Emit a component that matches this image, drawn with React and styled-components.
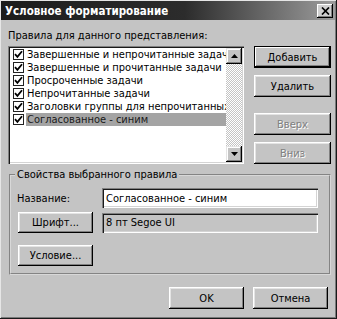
import React from 'react';
import styled, { createGlobalStyle } from 'styled-components';

const FONT = '"DejaVu Sans Condensed", "DejaVu Sans", sans-serif';

const GlobalStyle = createGlobalStyle`
  body {
    margin: 0;
    font-family: ${FONT};
    font-size: 11px;
  }
`;

const Window = styled.div`
  box-sizing: border-box;
  width: 337px;
  height: 319px;
  padding: 1px 2px 2px 1px;
  background: #c4c4c4;
  box-shadow: inset -1px -1px #1a1a1a, inset 1px 1px #e6e6e6, inset -2px -2px #7a7a7a;
  display: flex;
  flex-direction: column;
  font-family: ${FONT};
  font-size: 11px;
  color: #000;
`;

const TitleBar = styled.div`
  height: 19px;
  display: flex;
  align-items: center;
  justify-content: space-between;
  padding: 0 2px 0 4px;
  background: linear-gradient(to right, #1c1c1c, #2c2c2c 55%, #9c9c9c);
`;

const TitleText = styled.span`
  color: #fff;
  font-weight: bold;
  font-size: 11.5px;
`;

const CloseButton = styled.div`
  width: 16px;
  height: 14px;
  background: #d0d0d0;
  box-shadow: inset -1px -1px #000, inset 1px 1px #fff, inset -2px -2px #808080;
  display: flex;
  align-items: center;
  justify-content: center;
`;

const Body = styled.div`
  display: flex;
  flex-direction: column;
  padding: 9px 4px 0 7px;
`;

const Label = styled.div`
  line-height: 14px;
  white-space: nowrap;
`;

const MainRow = styled.div`
  display: flex;
  gap: 10px;
  margin-top: 3px;
  height: 118px;
`;

const ListBox = styled.div`
  box-sizing: border-box;
  width: 236px;
  height: 100%;
  background: #fff;
  padding: 2px;
  box-shadow: inset 1px 1px #808080, inset 2px 2px #1a1a1a, inset -1px -1px #fff, inset -2px -2px #d4d4d4;
  display: flex;
`;

const Items = styled.div`
  flex: 1;
  min-width: 0;
  overflow: hidden;
`;

const Item = styled.div`
  display: flex;
  align-items: center;
  height: 13px;
  padding-left: 3px;
`;

const CheckBox = styled.span`
  box-sizing: border-box;
  width: 11px;
  height: 11px;
  flex: none;
  margin-right: 2px;
  background: #fff;
  border: 1px solid #222;
  display: flex;
  align-items: center;
  justify-content: center;
`;

const ItemText = styled.span`
  flex: 1;
  line-height: 13px;
  padding-left: 1px;
  white-space: nowrap;
  overflow: hidden;
  background: ${p => (p.$selected ? '#a4a4a4' : 'transparent')};
  color: ${p => (p.$selected ? '#1a1a1a' : '#000')};
`;

const ScrollBar = styled.div`
  width: 16px;
  display: flex;
  flex-direction: column;
`;

const ArrowButton = styled.div`
  width: 16px;
  height: 16px;
  background: #c4c4c4;
  box-shadow: inset -1px -1px #000, inset 1px 1px #e4e4e4, inset -2px -2px #808080, inset 2px 2px #fff;
  display: flex;
  align-items: center;
  justify-content: center;
`;

const Track = styled.div`
  flex: 1;
  background: repeating-conic-gradient(#c4c4c4 0 25%, #fff 0 50%) 0 0 / 2px 2px;
`;

const ButtonColumn = styled.div`
  display: flex;
  flex-direction: column;
  gap: 7px;
`;

const Button = styled.button`
  box-sizing: border-box;
  width: ${p => p.$w || 75}px;
  height: ${p => p.$h || 22}px;
  margin-top: ${p => p.$push || 0}px;
  padding: 0;
  border: none;
  background: #c4c4c4;
  font-family: ${FONT};
  font-size: 11px;
  color: ${p => (p.disabled ? '#808080' : '#000')};
  text-shadow: ${p => (p.disabled ? '1px 1px #fff' : 'none')};
  box-shadow: ${p =>
    p.$default
      ? 'inset 0 0 0 1px #000, inset -2px -2px #000, inset 2px 2px #fff, inset -3px -3px #808080'
      : 'inset -1px -1px #000, inset 1px 1px #fff, inset -2px -2px #808080, inset 2px 2px #e4e4e4'};
`;

const Group = styled.fieldset`
  box-sizing: border-box;
  width: 322px;
  margin: 4px 0 0 1px;
  padding: 6px 10px 7px 7px;
  border: 2px groove #d8d8d8;
  min-width: 0;
`;

const Legend = styled.legend`
  padding: 0 2px;
  margin-left: -3px;
  line-height: 14px;
`;

const FormGrid = styled.div`
  display: grid;
  grid-template-columns: 75px 216px;
  column-gap: 9px;
  row-gap: 4px;
  align-items: center;
`;

const FieldLabel = styled.span`
  margin-left: -1px;
`;

const Field = styled.div`
  box-sizing: border-box;
  height: 20px;
  padding: 0 4px;
  display: flex;
  align-items: center;
  background: ${p => (p.$readOnly ? '#c4c4c4' : '#fff')};
  box-shadow: inset 1px 1px #808080, inset 2px 2px #1a1a1a, inset -1px -1px #fff, inset -2px -2px #d4d4d4;
  white-space: nowrap;
`;

const ConditionRow = styled.div`
  margin-top: 12px;
`;

const Footer = styled.div`
  display: flex;
  justify-content: flex-end;
  gap: 9px;
  margin-top: 12px;
  padding-right: 3px;
`;

const Check = () => (
  <svg width="9" height="9" viewBox="0 0 9 9">
    <path d="M1 4.2 L3.4 6.8 L8 1.2" fill="none" stroke="#000" strokeWidth="1.8" />
  </svg>
);

const Arrow = ({ down }) => (
  <svg width="7" height="4" viewBox="0 0 7 4">
    <path d={down ? 'M0 0 H7 L3.5 4 Z' : 'M0 4 H7 L3.5 0 Z'} fill="#000" />
  </svg>
);

const rules = [
  'Завершенные и непрочитанные задачи',
  'Завершенные и прочитанные задачи',
  'Просроченные задачи',
  'Непрочитанные задачи',
  'Заголовки группы для непрочитанных',
  'Согласованное - синим',
];

const App = () => {
  const selected = 5;
  return (
    <>
      <GlobalStyle />
      <Window>
        <TitleBar>
          <TitleText>Условное форматирование</TitleText>
          <CloseButton>
            <svg width="9" height="8" viewBox="0 0 9 8">
              <path d="M1 0.5 L8 7.5 M8 0.5 L1 7.5" stroke="#000" strokeWidth="1.7" />
            </svg>
          </CloseButton>
        </TitleBar>
        <Body>
          <Label>Правила для данного представления:</Label>
          <MainRow>
            <ListBox>
              <Items>
                {rules.map((r, i) => (
                  <Item key={r}>
                    <CheckBox>
                      <Check />
                    </CheckBox>
                    <ItemText $selected={i === selected}>{r}</ItemText>
                  </Item>
                ))}
              </Items>
              <ScrollBar>
                <ArrowButton>
                  <Arrow />
                </ArrowButton>
                <Track />
                <ArrowButton>
                  <Arrow down />
                </ArrowButton>
              </ScrollBar>
            </ListBox>
            <ButtonColumn>
              <Button $w={77} $default>Добавить</Button>
              <Button $w={77}>Удалить</Button>
              <Button $w={77} $push={9} disabled>Вверх</Button>
              <Button $w={77} disabled>Вниз</Button>
            </ButtonColumn>
          </MainRow>
          <Group>
            <Legend>Свойства выбранного правила</Legend>
            <FormGrid>
              <FieldLabel>Название:</FieldLabel>
              <Field>Согласованное - синим</Field>
              <Button $h={21}>Шрифт...</Button>
              <Field $readOnly>8 пт Segoe UI</Field>
            </FormGrid>
            <ConditionRow>
              <Button $h={21}>Условие...</Button>
            </ConditionRow>
          </Group>
          <Footer>
            <Button>OK</Button>
            <Button>Отмена</Button>
          </Footer>
        </Body>
      </Window>
    </>
  );
};

export default App;
